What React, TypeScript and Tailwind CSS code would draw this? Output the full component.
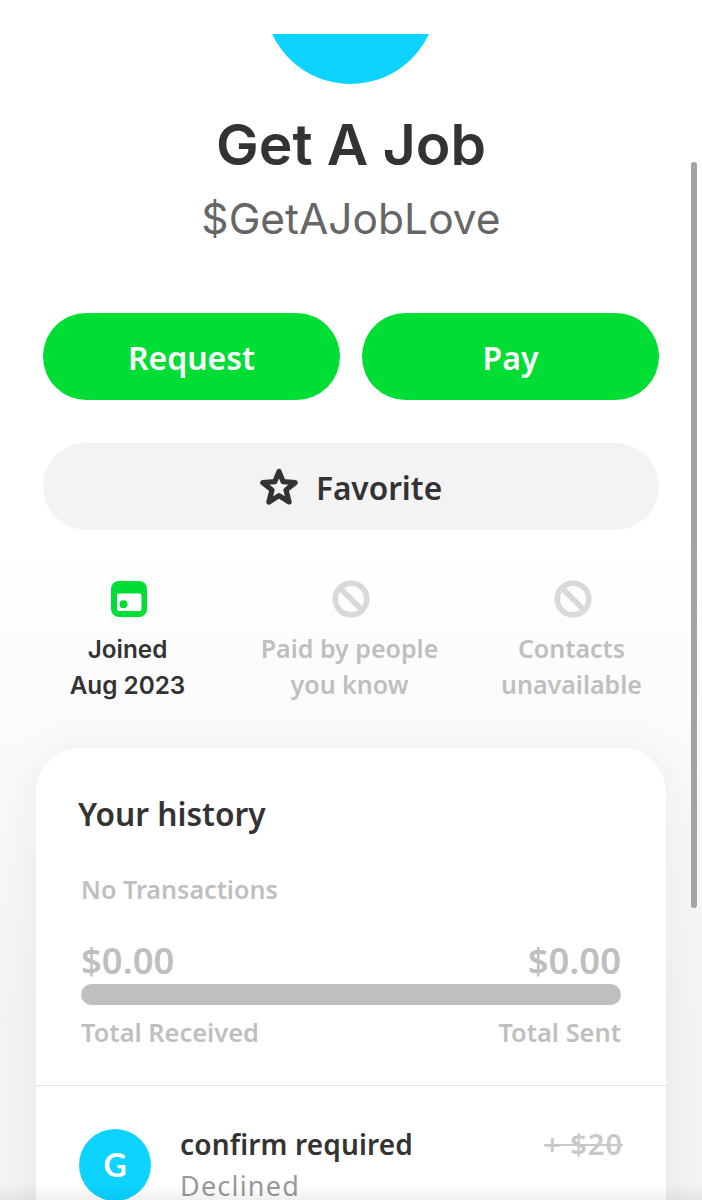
import type { ReactNode } from "react";

function CalendarIcon() {
  return (
    <svg width="38" height="38" viewBox="0 0 38 38" aria-hidden="true">
      <rect x="1" y="1" width="36" height="36" rx="8" fill="#00dd34" />
      <rect x="7" y="13.5" width="24.5" height="17.5" rx="2" fill="#fff" />
      <circle cx="13.5" cy="24.3" r="4" fill="#00dd34" />
    </svg>
  );
}

function BlockedIcon() {
  return (
    <svg width="38" height="38" viewBox="0 0 38 38" fill="none" stroke="#d9d9d9" strokeWidth="5.6" aria-hidden="true">
      <circle cx="19" cy="19" r="15.8" />
      <path d="M8 8l22 22" />
    </svg>
  );
}

function StarIcon() {
  return (
    <svg width="38" height="38" viewBox="0 0 38 38" fill="none" stroke="#333" strokeWidth="5.2" strokeLinejoin="round" aria-hidden="true">
      <path d="M19 3.5l4.2 10.2 12 .9-9.2 7.4 3.1 12-10.1-6.4L8.9 34 12 22l-9.2-7.4 12-.9z" />
    </svg>
  );
}

function Stat({ icon, lines, muted }: { icon: ReactNode; lines: [string, string]; muted?: boolean }) {
  return (
    <div className="flex w-[222px] flex-col items-center">
      {icon}
      <p
        className={`mr-[3px] text-center leading-[36px] font-semibold whitespace-nowrap ${
          muted ? "mt-[12px] text-[25px] text-[#bfbfbf]" : "mt-[13px] font-['Inter',sans-serif] text-[24.3px] text-[#333]"
        }`}
      >
        {lines[0]}
        <br />
        {lines[1]}
      </p>
    </div>
  );
}

function HistoryCard() {
  return (
    <section className="mx-[36px] h-[500px] rounded-t-[44px] bg-white shadow-[0_0_44px_rgba(0,0,0,0.05)]">
      <div className="h-[338px] border-b border-[#e4e4e4] px-[45px] pt-[46px]">
        <h2 className="-ml-[3px] text-[31.7px] leading-[40px] font-semibold text-[#333]">Your history</h2>
        <p className="mt-[38px] text-[25.1px] leading-[34px] font-semibold text-[#bfbfbf]">No Transactions</p>
        <div className="mt-[32px] flex justify-between text-[36.4px] leading-[44px] font-semibold text-[#bfbfbf]">
          <span>$0.00</span>
          <span>$0.00</span>
        </div>
        <div className="mt-[2px] h-[21px] rounded-full bg-[#bfbfbf]" />
        <div className="mt-[10px] flex justify-between text-[25.4px] leading-[34px] font-semibold text-[#bfbfbf]">
          <span>Total Received</span>
          <span>Total Sent</span>
        </div>
      </div>
      <div className="flex px-[43px] pt-[43px]">
        <div className="flex size-[72px] shrink-0 items-center justify-center rounded-full bg-[#0cd3ff] font-['Lato',sans-serif] text-[32px] font-bold text-white">
          G
        </div>
        <div className="-mt-[3px] ml-[29px] flex-1">
          <div className="flex justify-between leading-[36px] font-semibold">
            <span className="text-[28px] tracking-[0.15px] text-[#333]">confirm required</span>
            <span className="text-[29px] tracking-[1px] text-[#c8c8c8] line-through decoration-2">+ $20</span>
          </div>
          <p className="mt-[6px] text-[27px] leading-[36px] tracking-[1.2px] text-[#999]">Declined</p>
        </div>
      </div>
    </section>
  );
}

export default function App() {
  return (
    <main className="relative h-[1200px] w-[702px] overflow-hidden bg-linear-to-b from-white from-45% via-[#fafafc] via-62% to-[#f3f3f3] to-85% pt-[34px] font-['Noto_Sans',sans-serif]">
      <div className="flex h-[50px] items-end justify-center overflow-hidden pr-px">
        <div className="size-[173px] shrink-0 rounded-full bg-[#0cd3ff]" />
      </div>
      <header className="text-center font-['Inter',sans-serif]">
        <h1 className="mt-[31px] text-[57px] leading-[60px] font-semibold text-[#333]">Get A Job</h1>
        <p className="mt-[19px] text-[42.5px] leading-[50px] text-[#666]">$GetAJobLove</p>
      </header>
      <div className="mx-[43px] mt-[69px] grid grid-cols-2 gap-[22px] text-[32px] font-semibold text-white">
        <button className="h-[87px] rounded-full bg-[#00dd34] pt-[2px]">Request</button>
        <button className="h-[87px] rounded-full bg-[#00dd34] pt-[2px]">Pay</button>
      </div>
      <div className="mx-[43px] mt-[43px]">
        <button className="flex h-[87px] w-full items-center justify-center gap-[18px] rounded-full bg-[#f3f3f3] text-[31.6px] font-semibold text-[#333]">
          <StarIcon />
          <span className="pt-[2px]">Favorite</span>
        </button>
      </div>
      <div className="mt-[50px] flex h-[168px] justify-center">
        <Stat icon={<CalendarIcon />} lines={["Joined", "Aug 2023"]} />
        <Stat icon={<BlockedIcon />} lines={["Paid by people", "you know"]} muted />
        <Stat icon={<BlockedIcon />} lines={["Contacts", "unavailable"]} muted />
      </div>
      <HistoryCard />
      {/* scroll thumb */}
      <div className="absolute top-[162px] left-[691px] h-[746px] w-[6px] rounded-full bg-[#a3a3a3]" />
      {/* bottom edge fade */}
      <div className="absolute inset-x-0 bottom-0 h-[16px] bg-linear-to-b from-transparent to-black/6" />
    </main>
  );
}
